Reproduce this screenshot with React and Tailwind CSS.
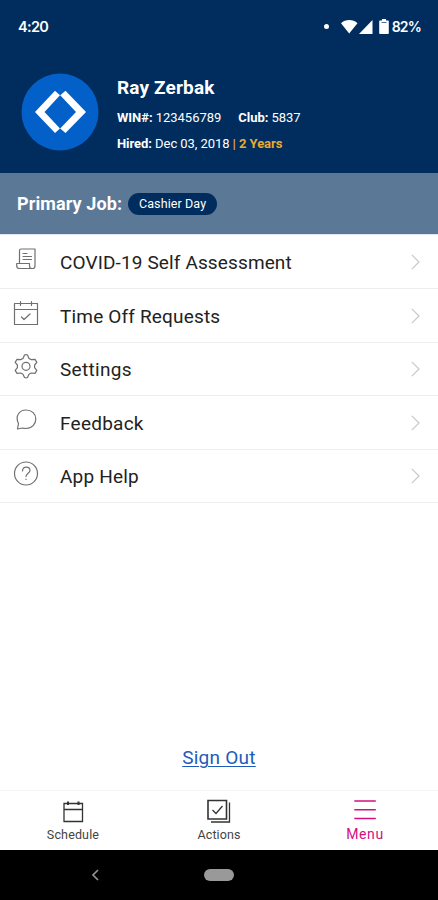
import React from "react";

const menuItems = [
  { label: "COVID-19 Self Assessment", icon: ScrollIcon, height: "h-[54px]", spacing: "tracking-[0.13px]" },
  { label: "Time Off Requests", icon: CalendarCheckIcon, height: "h-[54px]", spacing: "tracking-[0.17px]" },
  { label: "Settings", icon: GearIcon, height: "h-[53px]", spacing: "tracking-[0.3px]" },
  { label: "Feedback", icon: ChatIcon, height: "h-[54px]", spacing: "tracking-[0.25px]" },
  { label: "App Help", icon: HelpIcon, height: "h-[53px]", spacing: "tracking-[0.2px]" },
];

export default function App() {
  return (
    <div className="flex h-[900px] w-full flex-col bg-white font-['Roboto',sans-serif] text-[#222]">
      <header className="h-[173px] bg-[#002d5d] text-white">
        <StatusBar />
        <Profile />
      </header>

      <div className="flex h-[62px] items-center border-b border-[#dce7f3] bg-[#5b7897] pl-[17px]">
        <span className="text-[18px] font-bold leading-6 tracking-[0.1px] text-white">Primary Job:</span>
        <span className="ml-1.5 flex h-[22px] w-[89px] items-center justify-center rounded-full bg-[#002d5d] pt-0.5 text-[12.5px] tracking-[0.1px] text-white">
          Cashier Day
        </span>
      </div>

      <ul>
        {menuItems.map((item) => (
          <MenuRow key={item.label} {...item} />
        ))}
      </ul>

      <div className="flex flex-1 items-end justify-center pb-5">
        <a
          href="#"
          className="text-[19px] leading-6 tracking-[0.25px] text-[#1d5cb8] underline decoration-1 underline-offset-2"
        >
          Sign Out
        </a>
      </div>

      <TabBar />
      <SystemNav />
    </div>
  );
}

function StatusBar() {
  return (
    <div className="flex h-[54px] items-center justify-between pl-[18px] pr-[17px] font-['Inter',sans-serif] text-[14.5px] font-semibold leading-5">
      <span className="tracking-[-0.7px]">4:20</span>
      <div className="flex items-center">
        <span className="mb-0.5 mr-3 size-[5px] rounded-full bg-white" />
        <svg className="h-4 w-[48px]" viewBox="0 0 48 16" fill="#fff">
          <path d="M0 4.200C4.500-.2 12-.2 16.500 4.200L8.200 14.600z" />
          <path d="M31.500 1v14H18z" />
          <path d="M41 0h4v1.500h2q.8 0 .8.8v11.900q0 .8-.8.8h-8q-.8 0-.8-.8V2.300q0-.8.8-.8h2z" />
          <path d="M40.500 3.500h5" stroke="#526f91" strokeWidth="1" />
        </svg>
        <span className="ml-[3px] text-[14px] tracking-[-0.8px]">82%</span>
      </div>
    </div>
  );
}

function Profile() {
  return (
    <div className="flex pl-[21px] pt-[19px]">
      <svg className="size-[78px] shrink-0" viewBox="21 73 78 78">
        <circle cx="60" cy="112" r="38.500" fill="#0360c8" />
        <path
          d="M55 90.700L35 112l20 21 5-4.500L44.500 112l15.500-16.800zM65.500 90.700L86 112l-20.500 21-5.300-4.500L76 112 60.200 95.200z"
          fill="#fff"
        />
      </svg>
      <div className="ml-[18px] pt-[3px] text-[13px] leading-[26px]">
        <h1 className="text-[19px] font-bold leading-6 tracking-[0.15px]">Ray Zerbak</h1>
        <div className="mt-[5px] flex gap-[17px] tracking-[-0.03px]">
          <p>
            <b>WIN#:</b> 123456789
          </p>
          <p>
            <b>Club:</b> 5837
          </p>
        </div>
        <p className="tracking-[-0.06px]">
          <b>Hired:</b> Dec 03, 2018 <b className="text-[#e5ab35]">| 2 Years</b>
        </p>
      </div>
    </div>
  );
}

function MenuRow({ label, icon: Icon, height, spacing }) {
  return (
    <li className={`flex items-center border-b border-[#eee] pl-[13px] pr-[18px] ${height}`}>
      <Icon />
      <span className={`ml-[21px] flex-1 pt-0.5 text-[19px] leading-6 ${spacing}`}>{label}</span>
      <svg className="h-4 w-[9px]" viewBox="0 0 9 16" fill="none" stroke="#c8c8c8" strokeWidth="1.200">
        <path d="M.8 .8L8 8 .8 15.200" />
      </svg>
    </li>
  );
}

function LineIcon({ children }) {
  return (
    <svg
      className="mb-[5px] size-[26px] shrink-0"
      viewBox="0 0 26 26"
      fill="none"
      stroke="#707070"
      strokeWidth="1.200"
      strokeLinecap="round"
      strokeLinejoin="round"
    >
      {children}
    </svg>
  );
}

function ScrollIcon() {
  return (
    <LineIcon>
      <path d="M6.500 17V4.500q0-1.500 1.500-1.500h14v17q0 2.500-2.300 2.500H6Q3.700 22.500 3.700 19.500V17.500H16.500V20q0 2.500 2.500 2.500" />
      <path d="M10 7.500h4M10 10.500h8.500M10 13.500h8.500" />
    </LineIcon>
  );
}

function CalendarCheckIcon() {
  return (
    <LineIcon>
      <path d="M1.500 3.500h23v21h-23zM1.500 9.500h23M7.500 1.500v4M18.500 1.500v4M8.500 17l2.500 2.500 6-5.500" />
    </LineIcon>
  );
}

function GearIcon() {
  return (
    <LineIcon>
      <path d="M11.500 1Q13 .3 14.500 1L16 4.500 18.300 5.600 22 5.300 23.800 8.400 21.600 11v2.600L23.800 16.400 22 19.400 18.300 19 16 20.200 14.500 23.500Q13 24.200 11.500 23.500L10 20.200 7.700 19 4 19.400 2.200 16.400 4.400 13.600V11L2.200 8.400 4 5.300 7.700 5.600 10 4.500z" />
      <circle cx="13" cy="12.300" r="4" />
    </LineIcon>
  );
}

function ChatIcon() {
  return (
    <LineIcon>
      <path d="M4.500 22l1-5.500C1.500 8.500 7 3 13 3c6 0 9.800 4 9.800 9S19 21.500 13 21.500q-2 0-3.500-.5z" />
    </LineIcon>
  );
}

function HelpIcon() {
  return (
    <LineIcon>
      <circle cx="13" cy="12.500" r="11.500" />
      <path d="M9.500 10C9.500 4.500 17 5.500 17 9.500c0 2.500-4 3-4 6M13 18.200v.3" />
    </LineIcon>
  );
}

function TabBar() {
  return (
    <nav className="grid h-[60px] grid-cols-3 border-t border-[#f6f6f6] text-[12.500px] text-[#444]">
      <div className="flex flex-col items-center pt-2">
        <svg className="h-6 w-6" viewBox="0 0 24 24" fill="none" stroke="#333" strokeWidth="1.300">
          <path d="M3 4.500h18.500v18H3zM3 10.500h18.500" />
          <path d="M7 2.500v3.500M17.500 2.500v3.500" strokeWidth="2" />
        </svg>
        <span className="mt-0.5 leading-5 tracking-[0.15px]">Schedule</span>
      </div>
      <div className="flex flex-col items-center pt-2">
        <svg className="h-6 w-6" viewBox="0 0 24 24" fill="none" stroke="#333" strokeWidth="1.300">
          <path d="M1 1.500h18.500V20H1z" strokeWidth="1.600" />
          <path d="M4 23h18.500V3.500M5.500 11l3.500 3.500L15.500 7" />
        </svg>
        <span className="mt-0.5 leading-5 tracking-[0.1px]">Actions</span>
      </div>
      <div className="flex flex-col items-center pt-2 text-[#cf1180]">
        <svg className="h-6 w-6" viewBox="0 0 24 24" fill="none" stroke="currentColor" strokeWidth="1.600">
          <path d="M1.300 2h21.500M1.300 10.800h21.500M1.300 19.500h21.500" />
        </svg>
        <span className="mt-px text-[14px] leading-5 tracking-[0.6px]">Menu</span>
      </div>
    </nav>
  );
}

function SystemNav() {
  return (
    <div className="grid h-[50px] grid-cols-3 items-center bg-black">
      <svg className="ml-[91px] h-3 w-2" viewBox="0 0 8 12" fill="none" stroke="#929292" strokeWidth="1.700">
        <path d="M7 1L2 6l5 5" />
      </svg>
      <span className="h-3 w-[30px] justify-self-center rounded-full bg-[#999]" />
    </div>
  );
}
